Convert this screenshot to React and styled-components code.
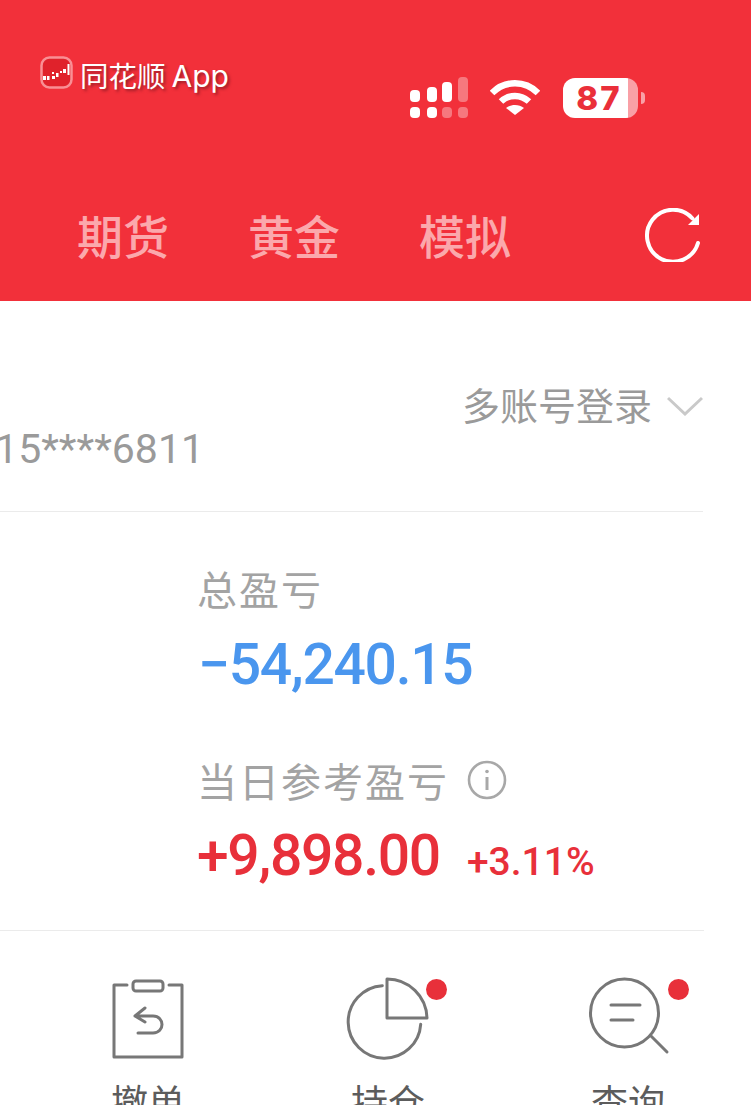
import React from "react";
import styled, { createGlobalStyle } from "styled-components";

const CJK = `"Noto Sans CJK SC", "Noto Sans", sans-serif`;

const GlobalStyle = createGlobalStyle`
  html, body {
    margin: 0;
    padding: 0;
    height: 1105px;
    overflow: hidden;
    background: #fff;
    font-family: ${CJK};
  }
`;

const Page = styled.div`
  width: 751px;
  height: 1105px;
  overflow: hidden;
  background: #fff;
`;

const Header = styled.header`
  height: 301px;
  background: #f2303a;
  box-sizing: border-box;
  padding-top: 55px;
`;

const StatusBar = styled.div`
  display: flex;
  align-items: flex-start;
  padding-left: 40px;
  height: 63px;
`;

const Source = styled.div`
  display: flex;
  align-items: center;
  gap: 7px;
  width: 370px;
  height: 40px;
  color: #fff;
  font-size: 28.5px;
  line-height: 40px;
  text-shadow: 2px 2px 3px rgba(110, 20, 30, 0.65);
`;

const SourceLatin = styled.span`
  font-family: "Inter", "Noto Sans", sans-serif;
  margin-left: 6px;
  font-size: 30px;
`;

const StatusIcons = styled.div`
  display: flex;
  align-items: center;
  margin-top: 22px;
`;

const BatteryBody = styled.div`
  margin-left: 23px;
  width: 75px;
  height: 40px;
  border-radius: 12px;
  background: linear-gradient(to right, #fff 87%, #f9a0a6 87%);
  color: #ea2f3a;
  font-family: "Inter", "Liberation Sans", sans-serif;
  font-weight: 800;
  font-size: 33px;
  line-height: 41px;
  text-align: center;
  letter-spacing: 2px;
  padding-right: 3px;
  box-sizing: border-box;
`;

const BatteryCap = styled.div`
  width: 4px;
  height: 12px;
  margin-left: 3px;
  background: #f9a0a6;
  border-radius: 0 7px 7px 0;
`;

const Tabs = styled.nav`
  display: flex;
  align-items: center;
  height: 62px;
  margin-top: 85px;
  padding-left: 77px;
`;

const Tab = styled.span`
  width: ${(p) => p.$width}px;
  color: #fba8ac;
  font-size: 46px;
  font-weight: 500;
  line-height: 62px;
  white-space: nowrap;
`;

const Refresh = styled.svg`
  margin-left: 54px;
  margin-top: 2px;
  display: block;
`;

const AccountRow = styled.section`
  width: 703px;
  height: 211px;
  box-sizing: border-box;
  border-bottom: 1px solid #ebebeb;
  display: flex;
  justify-content: space-between;
`;

const AccountNo = styled.div`
  width: 204px;
  display: flex;
  justify-content: flex-end;
  overflow: hidden;
  margin-top: 123px;
  height: 50px;
  color: #9a9a9a;
  font-family: "Roboto", sans-serif;
  font-size: 41px;
  line-height: 50px;
  white-space: nowrap;
`;

const MultiLogin = styled.div`
  display: flex;
  align-items: center;
  margin-top: 80px;
  height: 50px;
  color: #9a9a9a;
  font-size: 38px;
  line-height: 46px;
  gap: 15px;

  span {
    margin-top: -4px;
  }
`;

const Summary = styled.section`
  width: 704px;
  height: 419px;
  box-sizing: border-box;
  padding: 51px 0 0 197px;
  border-bottom: 1px solid #ebebeb;
`;

const Label = styled.div`
  display: flex;
  align-items: center;
  gap: 18px;
  height: 50px;
  color: #a3a3a3;
  font-size: 40px;
  line-height: 50px;
  letter-spacing: 2px;
  white-space: nowrap;
`;

const TotalValue = styled.div`
  margin-top: 17px;
  margin-left: 1px;
  height: 70px;
  color: #4a96ee;
  font-family: "Roboto", sans-serif;
  font-weight: 500;
  font-size: 57px;
  line-height: 70px;
  letter-spacing: -1.3px;
  white-space: nowrap;
`;

const TodayBlock = styled.div`
  margin-top: 55px;
`;

const ValueRow = styled.div`
  display: flex;
  align-items: baseline;
  gap: 27px;
  margin-top: 16px;
  height: 70px;
  color: #e8303a;
  font-family: "Roboto", sans-serif;
  white-space: nowrap;
`;

const TodayValue = styled.span`
  font-weight: 500;
  font-size: 57px;
  line-height: 70px;
  letter-spacing: -1.3px;
`;

const TodayPct = styled.span`
  font-weight: 500;
  font-size: 39px;
  line-height: 70px;
`;

const Actions = styled.nav`
  display: grid;
  grid-template-columns: repeat(3, 240px);
  padding-left: 28px;
  padding-top: 47px;
`;

const Action = styled.div`
  position: relative;
  justify-self: center;
  width: 148px;
  display: flex;
  flex-direction: column;
  align-items: center;
  color: #5c5c5c;
  font-size: 37px;
  line-height: 50px;
`;

const ActionIcon = styled.svg`
  display: block;
  overflow: visible;
  margin-bottom: 16px;
`;

const Dot = styled.span`
  position: absolute;
  top: 1px;
  left: ${(p) => p.$left}px;
  width: 21px;
  height: 21px;
  border-radius: 50%;
  background: #e8303a;
`;

const AppIcon = () => (
  <svg width="33" height="33" viewBox="0 0 33 33" style={{ marginTop: -5 }}>
    <rect x="1.5" y="1.5" width="30" height="30" rx="8" fill="#e0222b" stroke="#f98f94" strokeWidth="2.5" />
    <g fill="#fff">
      <rect x="3" y="20" width="3" height="4" />
      <rect x="7" y="20" width="2.5" height="4" />
      <rect x="12" y="16" width="2" height="2" />
      <rect x="12" y="20" width="3" height="3" />
      <rect x="16" y="17" width="2.5" height="4" />
      <rect x="20" y="15" width="2" height="2" />
      <rect x="23" y="13" width="3" height="4" />
      <rect x="27.5" y="8" width="2" height="11" />
    </g>
  </svg>
);

const SignalIcon = () => (
  <svg width="58" height="41" viewBox="0 0 58 41" fill="#fff">
    <rect x="0" y="13" width="10" height="12" rx="4" />
    <rect x="17" y="10" width="10" height="15" rx="4" />
    <rect x="32" y="5" width="10" height="20" rx="4" />
    <rect x="48" y="0" width="10" height="25" rx="4" fillOpacity="0.35" />
    <rect x="0" y="30" width="10" height="11" rx="4" />
    <rect x="17" y="30" width="10" height="11" rx="4" />
    <rect x="32" y="30" width="10" height="11" rx="4" fillOpacity="0.35" />
    <rect x="48" y="30" width="10" height="11" rx="4" fillOpacity="0.35" />
  </svg>
);

const WifiIcon = () => (
  <svg width="50" height="38" viewBox="0 0 50 38" fill="none" stroke="#fff" strokeWidth="6.5" style={{ marginLeft: 22 }}>
    <path d="M2 14 C15 1 35 1 48 14" />
    <path d="M11 22.5 C19 15 31 15 39 22.5" />
    <path d="M25 36 L16 29 C21 25 29 25 34 29 Z" fill="#fff" stroke="none" />
  </svg>
);

const ChevronIcon = () => (
  <svg width="36" height="20" viewBox="0 0 36 20" fill="none" stroke="#c9c9c9" strokeWidth="3">
    <path d="M1 2 L18 18 L35 2" />
  </svg>
);

const InfoIcon = () => (
  <svg width="40" height="40" viewBox="0 0 40 40" fill="none" stroke="#a8a8a8" strokeWidth="2.6">
    <circle cx="20" cy="20" r="18" />
    <path d="M20 17 V30" strokeWidth="3" />
    <circle cx="20" cy="11.5" r="1.8" fill="#a8a8a8" stroke="none" />
  </svg>
);

const App = () => (
  <>
    <GlobalStyle />
    <Page>
      <Header>
        <StatusBar>
          <Source>
            <AppIcon />
            <span>同花顺<SourceLatin>App</SourceLatin></span>
          </Source>
          <StatusIcons>
            <SignalIcon />
            <WifiIcon />
            <BatteryBody>87</BatteryBody>
            <BatteryCap />
          </StatusIcons>
        </StatusBar>
        <Tabs>
          <Tab $width={171}>期货</Tab>
          <Tab $width={171}>黄金</Tab>
          <Tab $width={171}>模拟</Tab>
          <Refresh width="58" height="54" viewBox="0 0 58 54" fill="none" stroke="#fff" strokeWidth="4" strokeLinecap="round">
            <path d="M48.5 10.5 A26 26 0 1 0 54 35" />
            <path d="M44 17 L55 17 L55 6 Z" fill="#fff" stroke="none" />
          </Refresh>
        </Tabs>
      </Header>

      <AccountRow>
        <AccountNo>15****6811</AccountNo>
        <MultiLogin>
          <span>多账号登录</span>
          <ChevronIcon />
        </MultiLogin>
      </AccountRow>

      <Summary>
        <Label>总盈亏</Label>
        <TotalValue>−54,240.15</TotalValue>
        <TodayBlock>
          <Label>
            当日参考盈亏
            <InfoIcon />
          </Label>
          <ValueRow>
            <TodayValue>+9,898.00</TodayValue>
            <TodayPct>+3.11%</TodayPct>
          </ValueRow>
        </TodayBlock>
      </Summary>

      <Actions>
        <Action>
          <ActionIcon width="72" height="82" viewBox="0 0 72 82" fill="none" stroke="#777" strokeWidth="3" strokeLinecap="round" strokeLinejoin="round">
            <path d="M15 7 H2 V79 H70 V7 H57" />
            <rect x="21" y="3" width="30" height="10" rx="3" />
            <path d="M33 30 L23 38 L33 44 M23 38 H41 C53 38 53 55 41 55 H26" />
          </ActionIcon>
          撤单
        </Action>
        <Action>
          <ActionIcon width="82" height="82" viewBox="0 0 82 82" fill="none" stroke="#777" strokeWidth="3" strokeLinecap="round" strokeLinejoin="round">
            <path d="M35.3 7.7 A36.3 36.3 0 1 0 73.7 46.3" />
            <path d="M40 1 V40 H80 A40 40 0 0 0 40 1 Z" />
          </ActionIcon>
          持仓
          <Dot $left={112} />
        </Action>
        <Action>
          <ActionIcon width="82" height="82" viewBox="0 0 82 82" fill="none" stroke="#777" strokeWidth="3" strokeLinecap="round">
            <circle cx="37.5" cy="35" r="34" />
            <path d="M24 27 H53 M24 42 H46" />
            <path d="M64 58 L80 74" />
          </ActionIcon>
          查询
          <Dot $left={114} />
        </Action>
      </Actions>
    </Page>
  </>
);

export default App;
